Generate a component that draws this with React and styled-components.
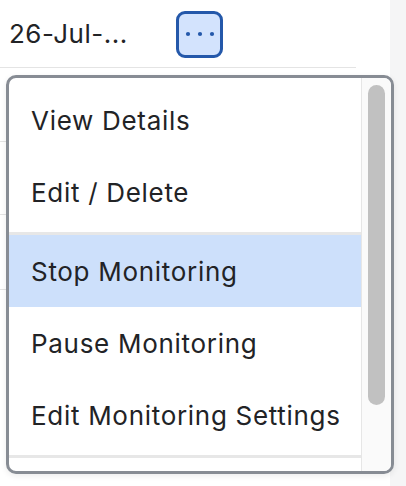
import React from "react";
import styled, { createGlobalStyle } from "styled-components";

const GlobalStyle = createGlobalStyle`
  html, body {
    margin: 0;
    padding: 0;
    background: #ffffff;
  }
  body {
    font-family: Inter, "Liberation Sans", Arial, sans-serif;
    color: #222326;
  }
`;

const Page = styled.div`
  display: flex;
  width: 406px;
  height: 486px;
  overflow: hidden;
  position: relative;
`;

const Table = styled.div`
  flex: 1;
  display: flex;
  flex-direction: column;
`;

const Gutter = styled.div`
  width: 16px;
  background: #f5f5f6;
`;

const Row = styled.div`
  display: flex;
  align-items: center;
  width: 356px;
  height: ${(p) => p.$h}px;
  padding-left: 9px;
  box-sizing: border-box;
  border-bottom: 1px solid #e4e4e4;
`;

const DateCell = styled.span`
  width: 167px;
  font-size: 26px;
  letter-spacing: 0.5px;
  white-space: nowrap;
`;

const MoreButton = styled.button`
  width: 47px;
  height: 47px;
  margin-top: 1px;
  padding: 0;
  display: flex;
  align-items: center;
  justify-content: center;
  background: #d3e3fd;
  border: 3px solid #2458aa;
  border-radius: 9px;
  cursor: pointer;
`;

const Menu = styled.div`
  position: absolute;
  left: 6px;
  top: 75px;
  width: 388px;
  height: 399px;
  box-sizing: border-box;
  border: 3px solid #878c94;
  border-radius: 10px;
  background: #ffffff;
  box-shadow: 0 2px 6px rgba(0, 0, 0, 0.08);
  display: flex;
  overflow: hidden;
`;

const List = styled.div`
  flex: 1;
  overflow: hidden;
`;

const Group = styled.div`
  padding-top: ${(p) => p.$top || 0}px;
  padding-bottom: 4px;
  border-bottom: 3px solid #e7e7e7;
`;

const Spacer = styled.div`
  height: 40px;
`;

const Item = styled.div`
  height: 72px;
  display: flex;
  align-items: center;
  padding-left: 22px;
  font-size: 26px;
  letter-spacing: 0.7px;
  white-space: nowrap;
  background: ${(p) => (p.$active ? "#cde0fb" : "transparent")};
`;

const Track = styled.div`
  width: 30px;
  background: #fafafa;
  border-left: 1px solid #e6e6e6;
  padding: 7px 0 0 6px;
  box-sizing: border-box;
`;

const Thumb = styled.div`
  width: 17px;
  height: 320px;
  border-radius: 9px;
  background: #c1c1c1;
`;

function Dots() {
  return (
    <svg width="30" height="8" viewBox="0 0 30 8">
      <circle cx="3" cy="4" r="2.1" fill="#2458aa" />
      <circle cx="15" cy="4" r="2.1" fill="#2458aa" />
      <circle cx="27" cy="4" r="2.1" fill="#2458aa" />
    </svg>
  );
}

export default function App() {
  return (
    <>
      <GlobalStyle />
      <Page>
        <Table>
          <Row $h={68}>
            <DateCell>26-Jul-...</DateCell>
            <MoreButton aria-label="More actions">
              <Dots />
            </MoreButton>
          </Row>
          <Row $h={74} />
          <Row $h={73} />
          <Row $h={75} />
        </Table>
        <Gutter />
        <Menu>
          <List>
            <Group $top={6}>
              <Item>View Details</Item>
              <Item>Edit / Delete</Item>
            </Group>
            <Group>
              <Item $active>Stop Monitoring</Item>
              <Item>Pause Monitoring</Item>
              <Item>Edit Monitoring Settings</Item>
            </Group>
            <Spacer />
          </List>
          <Track>
            <Thumb />
          </Track>
        </Menu>
      </Page>
    </>
  );
}
